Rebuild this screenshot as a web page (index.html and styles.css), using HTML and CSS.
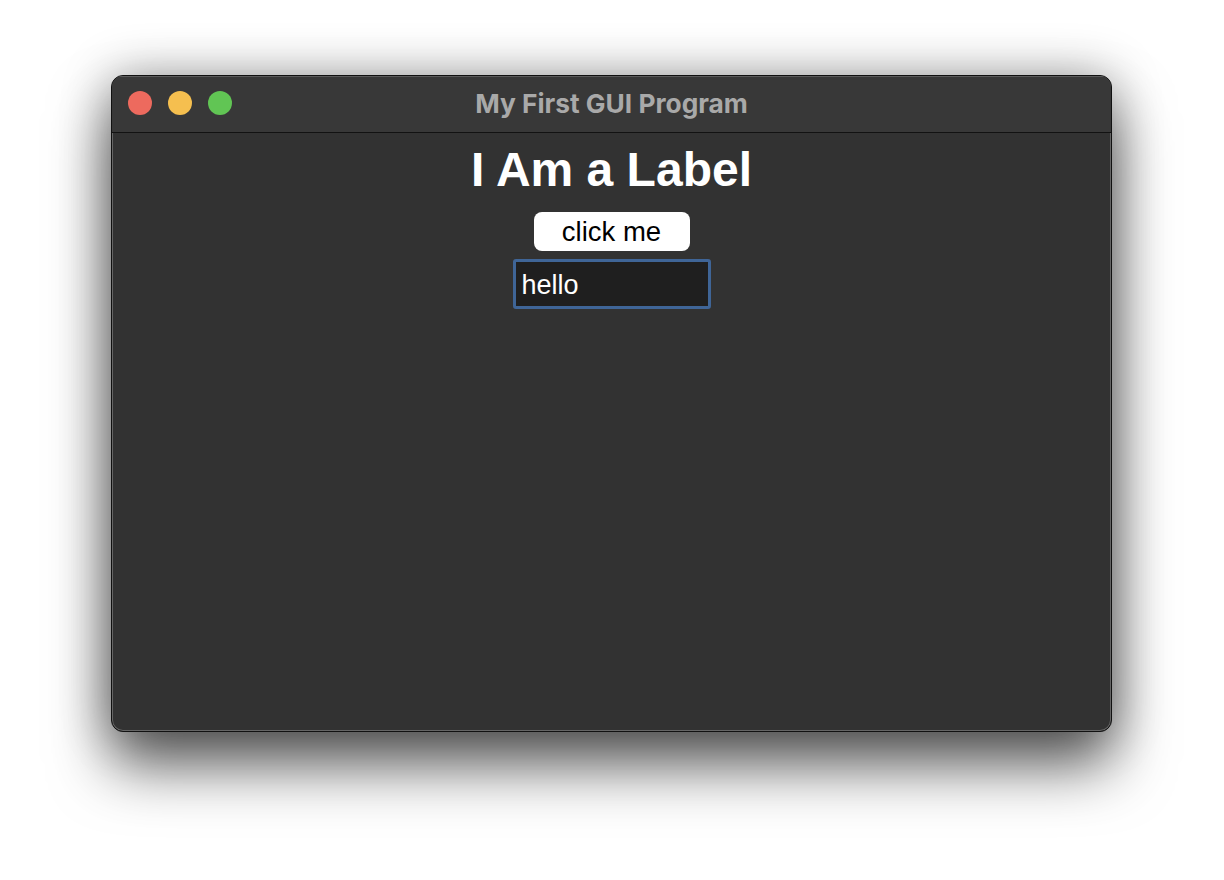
FILE: index.html
```html
<!DOCTYPE html>
<html>
<head>
<meta charset="utf-8">
<link rel="stylesheet" href="styles.css">
</head>
<body>
<div class="window">
  <div class="titlebar">
    <div class="lights">
      <span class="light red"></span>
      <span class="light yellow"></span>
      <span class="light green"></span>
    </div>
    <div class="title">My First GUI Program</div>
  </div>
  <div class="content">
    <div class="label">I Am a Label</div>
    <div class="button">click me</div>
    <div class="entry">hello</div>
  </div>
</div>
</body>
</html>
```
FILE: styles.css
```css
html, body {
  margin: 0;
  padding: 0;
  background: #ffffff;
  width: 1224px;
  height: 880px;
  overflow: hidden;
}
body {
  padding-top: 75px;
  padding-left: 111px;
  box-sizing: border-box;
}
.window {
  width: 1001px;
  height: 657px;
  box-sizing: border-box;
  border: 1px solid #111;
  border-radius: 12px;
  overflow: hidden;
  background: #323232;
  box-shadow: inset 0 0 0 1px rgba(255,255,255,0.25), 0 34px 60px rgba(0,0,0,0.62), 0 0 50px rgba(0,0,0,0.32);
  display: flex;
  flex-direction: column;
}
.titlebar {
  height: 56px;
  flex: none;
  background: #383838;
  border-bottom: 1px solid #121212;
  position: relative;
  display: flex;
  align-items: center;
  justify-content: center;
  box-shadow: inset 0 1px 0 rgba(255,255,255,0.18);
}
.lights {
  position: absolute;
  left: 16px;
  top: 15px;
  display: flex;
  gap: 16px;
}
.light {
  width: 24px;
  height: 24px;
  border-radius: 50%;
  display: block;
}
.red { background: #ed6a5e; }
.yellow { background: #f5bf4f; }
.green { background: #61c554; }
.title {
  font-family: "Inter", "Liberation Sans", sans-serif;
  font-weight: 700;
  font-size: 26.3px;
  color: #a9a9a9;
  margin-top: -2px;
}
.content {
  flex: 1;
  display: flex;
  flex-direction: column;
  align-items: center;
  padding-top: 9px;
  font-family: "Liberation Sans", Arial, sans-serif;
}
.label {
  font-size: 48px;
  font-weight: 700;
  line-height: 56px;
  color: #ffffff;
}
.button {
  margin-top: 14px;
  width: 156px;
  height: 39px;
  background: #ffffff;
  border-radius: 8px;
  color: #000;
  font-size: 27.5px;
  display: flex;
  align-items: center;
  justify-content: center;
}
.entry {
  margin-top: 8px;
  width: 198px;
  height: 50px;
  box-sizing: border-box;
  border: 3px solid #3f6597;
  border-radius: 3px;
  background: #1f1f1f;
  color: #fff;
  font-size: 27px;
  display: flex;
  align-items: center;
  padding-left: 6px;
  padding-top: 3px;
}
```
